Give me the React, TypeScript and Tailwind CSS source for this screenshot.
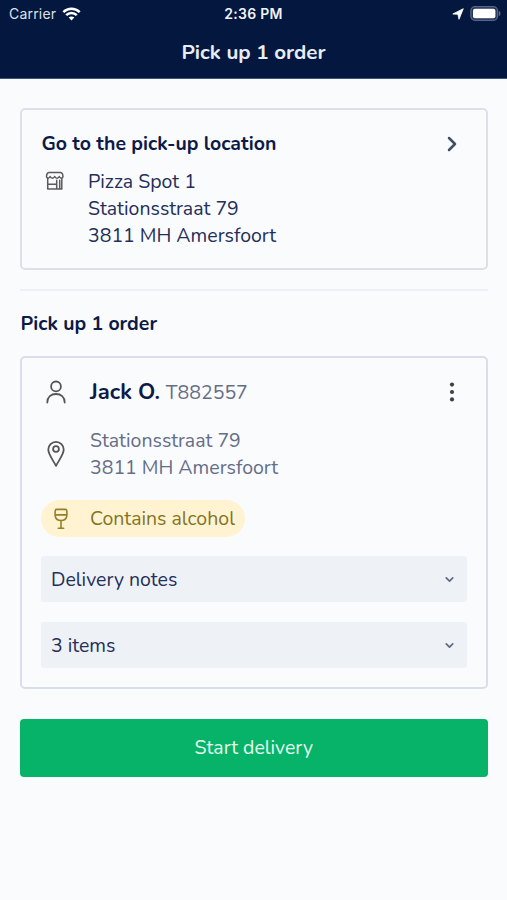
import React from 'react';
import { ChevronRight, ChevronDown } from 'lucide-react';

const StoreIcon = () => (
  <svg width="20" height="20" viewBox="0 0 20 20" fill="none" stroke="#5c595d" strokeWidth="1.5" strokeLinecap="round" strokeLinejoin="round">
    <path d="M4 1.500h11.500c1.200 0 2.100 1.200 2.400 3 .3 1.600-.3 2.700-1.400 2.700s-1.700-.7-2.200-1.700c-.5 1-1.100 1.700-2.300 1.700s-1.800-.7-2.300-1.700c-.5 1-1.100 1.700-2.300 1.700s-1.800-.7-2.300-1.700c-.5 1-1 1.700-2.100 1.700S1.300 6.100 1.600 4.500c.3-1.800 1.200-3 2.400-3z" />
    <path d="M2.700 7.500v10.400h14.100V7.500M2.700 13.200h9M11.700 17.900V9.300M14.700 9.300v8.600" />
  </svg>
);

const PersonIcon = () => (
  <svg width="20" height="24" viewBox="0 0 20 24" fill="none" stroke="#555554" strokeWidth="1.8" strokeLinecap="round">
    <circle cx="10" cy="6.400" r="4.900" />
    <path d="M1.300 22.500c0-5.500 3.800-8.500 8.700-8.500s8.700 3 8.700 8.500" />
  </svg>
);

const PinIcon = () => (
  <svg width="20" height="28" viewBox="0 0 20 28" fill="none" stroke="#555554" strokeWidth="1.8" strokeLinejoin="round">
    <path d="M10 25.800C7 20 2.300 14.600 2.300 9.600a7.700 7.700 0 0 1 15.400 0c0 5-4.700 10.400-7.700 16.200z" />
    <circle cx="10" cy="9" r="2.900" />
  </svg>
);

const WineIcon = () => (
  <svg width="16" height="22" viewBox="0 0 16 22" fill="none" stroke="#94802a" strokeWidth="1.6" strokeLinecap="round" strokeLinejoin="round">
    <path d="M3.700 1.400h8.600c.9 0 1.400.5 1.500 1.400.2 2 .3 4-.1 5.700-.6 2.600-2.700 4-5.700 4s-5.100-1.400-5.700-4c-.4-1.700-.3-3.700-.1-5.700.1-.9.6-1.400 1.500-1.400zM2.200 6.900h11.600M8 12.500v7.600M5.300 20.200h5.400" />
  </svg>
);

const WifiIcon = () => (
  <svg width="19" height="14" viewBox="0 0 19 14" fill="none" stroke="#fff" strokeWidth="2.500">
    <path d="M1.300 5.200c4.700-4.500 11.700-4.500 16.400 0M4.200 8.200c3-2.900 7.600-2.900 10.600 0" />
    <path d="M9.500 13.400 6.700 10.600c1.500-1.400 4.100-1.400 5.600 0z" fill="#fff" stroke="none" />
  </svg>
);

const LocationIcon = () => (
  <svg width="12" height="12" viewBox="0 0 12 12" fill="#fff">
    <path d="M11.300.7 7 11.300 5.900 6.300.8 6z" stroke="#fff" strokeWidth=".8" strokeLinejoin="round" />
  </svg>
);

const BatteryIcon = () => (
  <svg width="31" height="15" viewBox="0 0 31 15">
    <rect x=".9" y=".7" width="26.600" height="13.600" rx="4" fill="#253557" stroke="#58658a" strokeWidth="1.300" />
    <rect x="3" y="2.800" width="22.400" height="9.400" rx="2" fill="#fff" />
    <path d="M28.800 5c2.200.6 2.200 4.400 0 5z" fill="#65708f" />
  </svg>
);

const sections = ['Delivery notes', '3 items'];

const App: React.FC = () => {
  return (
    <div className="h-[900px] w-[507px] bg-[#f9fbfd] font-['Nunito','Lato','Noto_Sans',sans-serif] text-[19.5px] leading-[27px] text-[#242e58]">
      {/* Status bar + title */}
      <header className="h-[79px] border-b border-[#3d5674] bg-[#03173f] text-white">
        <div className="grid h-[27px] grid-cols-3 items-center pl-[9px] pr-[6px] font-['Inter',sans-serif] text-[14px]">
          <div className="flex items-center gap-[6px] text-[#dde1ea]">
            <span className="tracking-[0.2px]">Carrier</span>
            <WifiIcon />
          </div>
          <span className="-ml-[3px] text-center font-semibold tracking-[0.25px] text-[#f0f2f6]">2:36 PM</span>
          <div className="flex items-center justify-end gap-[6px]">
            <LocationIcon />
            <BatteryIcon />
          </div>
        </div>
        <h1 className="pt-[12px] text-center text-[20.6px] font-bold text-[#e8ecf3]">Pick up 1 order</h1>
      </header>

      <main className="pl-[20px] pr-[19.5px] pt-[29px]">
        {/* Pick-up location */}
        <section className="h-[162px] rounded-[5px] border-2 border-[#dce0e9] px-[19.5px] pt-[20px]">
          <div className="flex items-center justify-between pr-[2px]">
            <h2 className="font-bold text-[#0d1a47]">Go to the pick-up location</h2>
            <ChevronRight size={24} strokeWidth={2.5} className="text-[#414c69]" />
          </div>
          <div className="mt-[11px] flex">
            <div className="w-[46.5px] pl-[3px] pt-[3px]"><StoreIcon /></div>
            <address className="not-italic">
              Pizza Spot 1<br />
              Stationsstraat 79<br />
              3811 MH Amersfoort
            </address>
          </div>
        </section>

        <hr className="mt-[19px] border-t-2 border-[#edf0f4]" />

        <h2 className="mt-[19px] pl-[0.5px] font-bold text-[#0d1a47]">Pick up 1 order</h2>

        {/* Order */}
        <section className="mt-[19px] h-[333px] rounded-[5px] border-2 border-[#dadeea] pl-[19px] pr-[19px] pt-[19px]">
          <div className="flex h-[30px] items-center">
            <div className="w-[49px] pl-[5px]"><PersonIcon /></div>
            <span className="pt-[1px] text-[22px] font-bold text-[#0d1a47]">Jack O.</span>
            <span className="ml-[6px] pt-[1px] text-[#666d88]">T882557</span>
            <svg className="ml-auto mr-[12px]" width="6" height="22" viewBox="0 0 6 22" fill="#414247">
              <circle cx="3" cy="3.600" r="2.100" />
              <circle cx="3" cy="11" r="2.100" />
              <circle cx="3" cy="18.400" r="2.100" />
            </svg>
          </div>
          <div className="mt-[20px] flex items-center">
            <div className="w-[49px] pl-[5px]"><PinIcon /></div>
            <address className="not-italic text-[#666d88]">
              Stationsstraat 79<br />
              3811 MH Amersfoort
            </address>
          </div>
          <div className="mt-[19px] flex h-[37px] w-[204px] items-center rounded-full bg-[#fff3d2] pl-[12px] text-[#837527]">
            <WineIcon />
            <span className="ml-[21px] whitespace-nowrap">Contains alcohol</span>
          </div>
          <div className="mt-[19px] flex flex-col gap-[20px]">
            {sections.map(label => (
              <button key={label} className="flex h-[46px] items-center justify-between rounded-[3px] bg-[#eef2f7] pl-[10px] pr-[11px]">
                <span className="pt-[1px]">{label}</span>
                <ChevronDown size={13} strokeWidth={3.2} className="text-[#626b80]" />
              </button>
            ))}
          </div>
        </section>

        <button className="mt-[29.5px] h-[58.5px] w-full rounded-[4px] bg-[#07b369] text-[#e4faef]">Start delivery</button>
      </main>
    </div>
  );
};

export default App;
